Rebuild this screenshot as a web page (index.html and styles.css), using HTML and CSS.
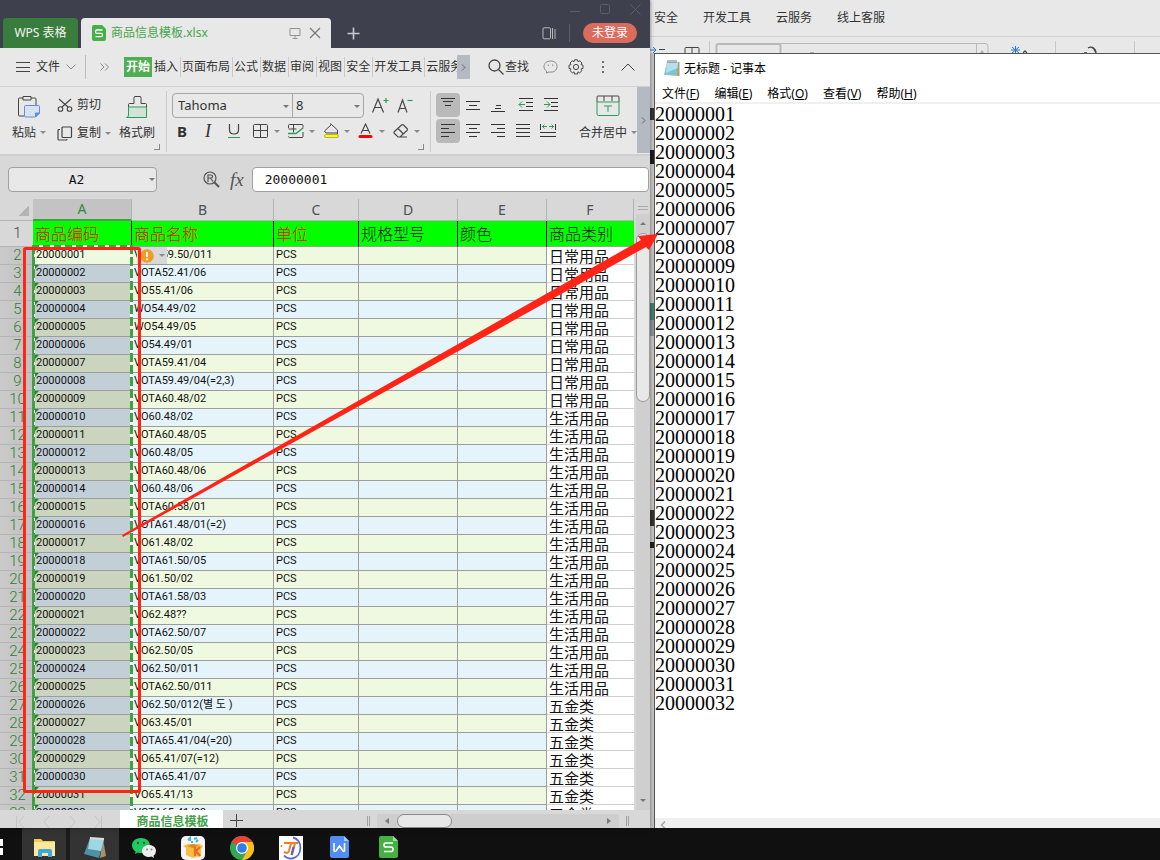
FILE: index.html
```html
<!DOCTYPE html>
<html lang="zh-CN">
<head>
<meta charset="utf-8">
<title>商品信息模板.xlsx</title>
<link rel="stylesheet" href="styles.css">
</head>
<body>
<div class="screen">
  <div class="desktop">
    <main class="wps">
      <header class="titlebar">
        <button class="home-tab">WPS 表格</button>
        <div class="doc-tab">
          <svg width="14" height="16" viewBox="0 0 14 16"><path d="M2 0h8l4 4v10q0 2-2 2H2q-2 0-2-2V2q0-2 2-2z" fill="#45b045"/><path d="M10.500 5H5Q3.500 5 3.500 6.700T5 8.300h4q1.500 0 1.500 1.600T9 11.600H3.500" fill="none" stroke="#fff" stroke-width="1.300"/></svg>
          <span class="doc-name">商品信息模板.xlsx</span>
          <svg width="12" height="12" viewBox="0 0 12 12" fill="none" stroke="#929292"><path d="M1 1.500h10v7H1zM6 8.500v3M3.500 11.500h5"/></svg>
          <button class="plain" aria-label="关闭"><svg width="12" height="12" viewBox="0 0 12 12" stroke="#777" stroke-width="1.200"><path d="M1 1l10 10M11 1L1 11"/></svg></button>
        </div>
        <button class="plain new-tab" aria-label="新建"><svg width="13" height="13" viewBox="0 0 13 13" stroke="#c9cad0" stroke-width="1.600"><path d="M6.500 0.500v12M.5 6.500h12"/></svg></button>
        <div class="title-right">
          <div class="window-buttons">
            <svg width="72" height="14" viewBox="0 0 72 14" fill="none" stroke="#5b5d68"><path d="M1 9.500h10"/><rect x="31.500" y="2.500" width="9" height="9" rx="1"/><path d="M61.500 2.500l10 10M71.500 2.500l-10 10"/></svg>
          </div>
          <div class="login-row">
            <svg width="14" height="13" viewBox="0 0 14 13" fill="none" stroke="#b6b7bd"><rect x="1" y=".8" width="7.500" height="11" rx="1"/><path d="M10.500 1v11M13 2v10"/></svg>
            <span class="sep-dark"></span>
            <button class="login">未登录</button>
          </div>
        </div>
      </header>

      <nav class="menubar">
        <button class="plain file-menu">
          <svg width="14" height="11" viewBox="0 0 14 11" stroke="#444"><path d="M0 .5h14M0 5.500h14M0 9.500h14"/></svg>
          文件
          <svg width="10" height="6" viewBox="0 0 10 6" fill="none" stroke="#888"><path d="M.5.5L5 5 9.500.5"/></svg>
        </button>
        <span class="sep tall"></span>
        <span class="more"><svg width="9" height="8" viewBox="0 0 9 8" fill="none" stroke="#888"><path d="M.5.5L4 4 .5 7.500M5 .5L8.500 4 5 7.500"/></svg></span>
        <div class="tabs">
          <button class="active">开始</button><button>插入</button><button>页面布局</button><button>公式</button><button>数据</button><button>审阅</button><button>视图</button><button>安全</button><button>开发工具</button><button>云服务</button>
        </div>
        <button class="scroll-right" aria-label="更多选项卡"><svg width="5" height="7" viewBox="0 0 5 7" fill="none" stroke="#666"><path d="M1 .5L4 3.500 1 6.500"/></svg></button>
        <button class="plain find"><svg width="16" height="16" viewBox="0 0 16 16" fill="none" stroke="#444" stroke-width="1.300"><circle cx="6.500" cy="6.500" r="5.500"/><path d="M10.500 10.500l5 5"/></svg>查找</button>
        <div class="menu-icons">
          <svg width="15" height="14" viewBox="0 0 15 14" fill="none" stroke="#8a8a8a"><path d="M7.500 1C3.500 1 1 3.500 1 6.500c0 2 1 3.500 2.500 4.500v2l2.500-1c5 .8 8-2 8-5.500S11.500 1 7.500 1z"/><path d="M5.300 4.500v1.500M9.700 4.500v1.500"/></svg>
          <svg width="16" height="16" viewBox="0 0 16 16" fill="none" stroke="#444"><circle cx="8" cy="8" r="2.600"/><path d="M6.500.8h3l.5 1.900 1.700-.9 2.200 2.200-.9 1.600 2 .6v3.200l-2 .6.9 1.700-2.200 2.100-1.700-.9-.5 2.100h-3L6 12.900l-1.700.9-2.200-2.100.9-1.700-2-.6V6.200l2-.6L2.100 4l2.200-2.200 1.700.9z"/></svg>
          <svg class="dots" width="4" height="14" viewBox="0 0 4 14" fill="#444"><circle cx="2" cy="2" r="1"/><circle cx="2" cy="7" r="1"/><circle cx="2" cy="12" r="1"/></svg>
          <svg width="14" height="8" viewBox="0 0 14 8" fill="none" stroke="#444"><path d="M.5 7.500L7 1l6.500 6.500"/></svg>
        </div>
      </nav>

      <section class="ribbon">
        <div class="group clipboard">
          <button class="big paste">
            <svg width="24" height="24" viewBox="0 0 24 24" fill="none" stroke="#444"><path d="M6 3H2.500q-1 0-1 1v16q0 1 1 1H7M14 3h4q1 0 1 1v6M6 1.500h8V5H6z"/><path d="M8.500 10.500h13q1 0 1 1V18l-4 4h-10q-1 0-1-1v-9.500q0-1 1-1z" fill="#d9e2f0" stroke="#5c8fdf"/><path d="M22.500 18h-4v4z" fill="#5c8fdf" stroke="#5c8fdf"/></svg>
            <span>粘贴<i class="caret"></i></span>
          </button>
          <div class="stack">
            <button class="tool"><svg width="16" height="14" viewBox="0 0 16 14" fill="none" stroke="#444" stroke-width="1.100"><circle cx="3.500" cy="11" r="2.300"/><circle cx="12.500" cy="11" r="2.300"/><path d="M2 1l9 8M14 1L5 9"/></svg>剪切</button>
            <button class="tool"><svg width="16" height="15" viewBox="0 0 16 15" fill="none" stroke="#444" stroke-width="1.200"><rect x="5" y="1" width="9.500" height="10.500" rx="1"/><path d="M3 3.500H2q-1 0-1 1V13q0 1 1 1h7q1 0 1-1"/></svg>复制<i class="caret"></i></button>
          </div>
          <button class="big painter">
            <svg width="22" height="24" viewBox="0 0 22 24" fill="none"><path d="M2.500 12h18v10.500h-18z" fill="#d3e2d8"/><path d="M2.500 12V9.500q0-1 1-1H8V5Q7.500 3.500 8.500 1.500h6Q15.500 3.500 15 5v3.500h4.500q1 0 1 1V12" stroke="#444"/><path d="M2 12h18.500v10.500M2.500 12v8q0 2.500-2 2.500h20" stroke="#2a9d57"/></svg>
            <span>格式刷</span>
          </button>
        </div>
        <div class="group font">
          <div class="font-row">
            <div class="font-box">
              <label class="pick name"><select aria-label="字体"><option>Tahoma</option></select></label>
              <label class="pick size"><select aria-label="字号"><option>8</option></select></label>
            </div>
            <button class="plain" aria-label="增大字号"><svg width="17" height="17" viewBox="0 0 17 17" fill="none" stroke="#444" stroke-width="1.200"><path d="M.5 15.500L6 2l5.500 13.500M2.500 10.500h7"/><path d="M14 1v5M11.500 3.500h5" stroke="#2a9d57"/></svg></button>
            <button class="plain" aria-label="减小字号"><svg width="17" height="17" viewBox="0 0 17 17" fill="none" stroke="#444" stroke-width="1.200"><path d="M1 15.500L5.500 3 10 15.500M2.500 11.500h6"/><path d="M10.500 3.500h5" stroke="#2a9d57"/></svg></button>
          </div>
          <div class="style-row">
            <button class="letter b">B</button><button class="letter i">I</button>
            <button class="letter" aria-label="下划线"><svg width="14" height="16" viewBox="0 0 14 16" fill="none"><path d="M2.500 1v6q0 4 4.500 4t4.500-4V1" stroke="#444" stroke-width="1.200"/><path d="M1 14.500h12" stroke="#2a9d57"/></svg></button>
            <button class="drop" aria-label="边框"><svg width="16" height="16" viewBox="0 0 16 16" fill="none" stroke="#444"><rect x=".5" y="1.500" width="14" height="13" rx="1"/><path d="M7.500 1.500v13M.5 7.500h14"/></svg><i class="caret"></i></button>
            <button class="drop" aria-label="绘图边框"><svg width="16" height="16" viewBox="0 0 16 16" fill="none" stroke="#444"><path d="M15 4V2.500q0-1-1-1H1.500q-1 0-1 1V5M5.500 1.500v8M.5 6h8M.5 13.500q0 1 1 1H14q1 0 1-1V9"/><path d="M0 10.500h8l7.500-6" stroke="#2a9d57" stroke-width="1.400"/></svg><i class="caret"></i></button>
            <button class="drop" aria-label="填充颜色"><svg width="17" height="16" viewBox="0 0 17 16" fill="none" stroke="#444"><path d="M3 10L1.500 8 8.500 1.500 14.500 7v3zM8.500 1.500L7 .5M14.500 7v4"/><rect x="1.500" y="11.500" width="14" height="3" rx="1.500" fill="#ff0" stroke="#b8b23c"/></svg><i class="caret"></i></button>
            <button class="drop" aria-label="字体颜色"><svg width="15" height="16" viewBox="0 0 15 16" fill="none"><path d="M3 10.500L7.500 1 12 10.500M4.500 7.500h6" stroke="#444" stroke-width="1.100"/><path d="M2 13.500h11" stroke="#f00" stroke-width="3" stroke-linecap="round"/></svg><i class="caret"></i></button>
            <button class="drop" aria-label="清除"><svg width="16" height="16" viewBox="0 0 16 16" fill="none" stroke="#444" stroke-width="1.100"><path d="M1 9l7.500-7q1-.8 2 0L14 5.500q1 1 0 2L7 14H5L1 10zM5 5.500l5.500 5.500M6 14h8"/></svg><i class="caret"></i></button>
          </div>
        </div>
        <div class="group align">
          <div class="align-grid">
            <button class="on" aria-label="顶端对齐"><svg viewBox="0 0 24 24"><path d="M5 5.500h14M7 8.500h10M9 12.500h6"/></svg></button>
            <button aria-label="垂直居中"><svg viewBox="0 0 24 24"><path d="M5 8.500h14M8 12.500h8M5 16.500h14"/></svg></button>
            <button aria-label="底端对齐"><svg viewBox="0 0 24 24"><path d="M10 12.500h5M9 15.500h6M5 18.500h14"/></svg></button>
            <button aria-label="减少缩进"><svg viewBox="0 0 24 24"><path d="M8 5.500h14M15 9.500h7M15 13.500h7M8 17.500h14"/><path class="g" d="M8 11.500h6M11 8.500l-3 3 3 3"/></svg></button>
            <button aria-label="增加缩进"><svg viewBox="0 0 24 24"><path d="M8 5.500h14M15 9.500h7M15 13.500h7M8 17.500h14"/><path class="g" d="M8 11.500h6M11 8.500l3 3-3 3"/></svg></button>
            <button class="on" aria-label="左对齐"><svg viewBox="0 0 24 24"><path d="M5 5.500h14M5 9.500h8M5 13.500h14M5 17.500h8"/></svg></button>
            <button aria-label="水平居中"><svg viewBox="0 0 24 24"><path d="M5 5.500h14M8 9.500h8M5 13.500h14M8 17.500h8"/></svg></button>
            <button aria-label="右对齐"><svg viewBox="0 0 24 24"><path d="M5 5.500h14M11 9.500h8M5 13.500h14M11 17.500h8"/></svg></button>
            <button aria-label="两端对齐"><svg viewBox="0 0 24 24"><path d="M5 5.500h14M5 9.500h14M5 13.500h14M5 17.500h14"/></svg></button>
            <button aria-label="分散对齐"><svg viewBox="0 0 24 24"><path d="M4.500 5v6M19.500 5v6M4 13.500h16M4 17.500h16"/><path class="g" d="M6 7.500h5M8.500 5.500l-2 2 2 2M13 7.500h5M15.500 5.500l2 2-2 2"/></svg></button>
          </div>
          <button class="big merge">
            <svg width="24" height="22" viewBox="0 0 24 22" fill="none" stroke="#444"><path d="M1 7V2q0-1 1-1h20q1 0 1 1v5M8 1v5M16 1v5"/><path d="M1 7h22v12q0 1.500-1.500 1.500h-19Q1 20.500 1 19zM8 11h8M12 11v6" stroke="#2a9d57"/></svg>
            <span>合并居中<i class="caret"></i></span>
          </button>
        </div>
        <button class="ribbon-next" aria-label="更多工具"><svg width="5" height="7" viewBox="0 0 5 7" fill="none" stroke="#666"><path d="M1 .5L4 3.500 1 6.500"/></svg></button>
      </section>

      <section class="formula">
        <label class="pick name-box"><input aria-label="名称框" value="A2"></label>
        <svg width="17" height="17" viewBox="0 0 17 17" fill="none" stroke="#555" stroke-width="1.200"><circle cx="7" cy="7" r="6"/><path d="M11.500 11.500l4.500 4.500" stroke-width="2"/><path d="M5 11V4h3q1.500 0 1.500 1.500T8 7H5M7.500 7L10 10.500"/></svg>
        <span class="fx">fx</span>
        <input class="formula-input" aria-label="编辑栏" value="20000001">
      </section>

      <section class="sheet">
        <div class="grid">
          <table>
            <colgroup><col class="c0"><col class="c1"><col class="c2"><col class="c3"><col class="c4"><col class="c5"><col></colgroup>
            <thead><tr><th class="corner"></th><th class="current">A</th><th>B</th><th>C</th><th>D</th><th>E</th><th>F</th></tr></thead>
            <tbody id="rows">
              <tr class="heads"><th>1</th><td class="red">商品编码</td><td class="red">商品名称</td><td class="red">单位</td><td>规格型号</td><td>颜色</td><td>商品类别</td></tr>
            </tbody>
          </table>
          <div class="ants"></div>
          <button class="warning" aria-label="错误检查"><svg width="14" height="14" viewBox="0 0 14 14"><circle cx="7" cy="7" r="6.800" fill="#f09c28"/><path d="M7 3v5M7 9.500v1.800" stroke="#fff" stroke-width="1.800"/></svg><i class="caret"></i></button>
        </div>
        <div class="vscroll"><span class="split"></span><span class="track"><i class="up"></i><b></b><i class="down"></i></span></div>
      </section>

      <footer class="sheetbar">
        <svg class="sheet-nav" width="90" height="12" viewBox="0 0 90 12" fill="none" stroke="#c4c4c4"><path d="M1.500 0v12M9 0L4 6l5 6M34 0l-5 6 5 6M55 0l5 6-5 6M80 0l5 6-5 6M86.500 0v12"/></svg>
        <button class="sheet-tab">商品信息模板</button>
        <button class="plain add-sheet" aria-label="新建工作表"><svg width="13" height="13" viewBox="0 0 13 13" stroke="#444"><path d="M6.500 0v13M0 6.500h13"/></svg></button>
        <div class="hscroll"><span class="grip"></span><span class="htrack"><i class="left"></i><b></b><i class="right"></i></span><span class="grip"></span></div>
      </footer>
    </main>

    <section class="behind">
      <nav class="behind-menu"><a href="#">安全</a><a href="#">开发工具</a><a href="#">云服务</a><a href="#">线上客服</a></nav>
      <div class="behind-tools">
        <svg width="505" height="17" viewBox="0 0 505 17" fill="none">
          <path d="M0 13h6M3 10l3 3-3 3" stroke="#2878d0"/><path d="M9 12.500h6M9 16.500h6" stroke="#444"/>
          <path d="M35 17v-5.500q0-1 1-1h12q1 0 1 1V17M42 10.500V17" stroke="#444"/>
          <path d="M59.500 4v13M405.500 4v13M484.500 4v13" stroke="#c8c8c8"/>
          <path d="M66.500 17V9q0-2.500 2.500-2.500h266q3 0 3 3V17M326.500 7v10" stroke="#b9b9b9"/>
          <path d="M66.500 17V9q0-2 2-2h60q2 0 2 2v8" stroke="#b9b9b9" stroke-width="2"/><path d="M160 16h4" stroke="#777"/>
          <path d="M330 16l2-3 2 3" fill="#aaa"/><path d="M361 13h9M365.500 9v8M362 10l7 6M369 10l-7 6" stroke="#2878d0"/><path d="M373 17q2-6 4 0M434 16h3M438 11q5-3 8 5M442 10q4 2 4 6" stroke="#444" stroke-width="1.300"/>
        </svg>
      </div>
      <div class="notepad">
        <header><svg width="16" height="17" viewBox="0 0 16 17"><path d="M4 2h11.500v14L3 15z" fill="#b59a6d"/><path d="M3 2h11l-1 13H0z" fill="#7fc4d4"/><path d="M3 2h11l-.5 6L2 13z" fill="#b3e0ea"/><path d="M4 0v3M6 0v3M8 0v3M10 0v3M12 0v3" stroke="#555" stroke-width=".8"/></svg><h1>无标题 - 记事本</h1></header>
        <nav><button>文件(<u>F</u>)</button><button>编辑(<u>E</u>)</button><button>格式(<u>O</u>)</button><button>查看(<u>V</u>)</button><button>帮助(<u>H</u>)</button></nav>
        <textarea id="note" aria-label="记事本内容" spellcheck="false"></textarea>
        <footer><svg width="6" height="8" viewBox="0 0 6 8" fill="none" stroke="#a6a6a6" stroke-width="1.500"><path d="M5 .5L1.500 4 5 7.500"/></svg></footer>
      </div>
    </section>
  </div>

  <footer class="taskbar">
    <span class="start"></span>
    <button class="task open" aria-label="资源管理器"><svg width="24" height="24" viewBox="0 0 24 24"><path d="M1 3h7l2 2h11q1 0 1 1v14H1z" fill="#f6c947"/><path d="M1 6h21v14H1z" fill="#ffe79b"/><path d="M5 21v-6q0-2 2-2h10q2 0 2 2v6h-4v-4H9v4z" fill="#39a9e0"/></svg></button>
    <button class="task open" aria-label="记事本"><svg width="24" height="24" viewBox="0 0 24 24"><path d="M20 3l3 17-6 2z" fill="#a7906b"/><path d="M7 2l14 1-5 19L1 18z" fill="#4d91a5"/><path d="M7 2l14 1-3 12-13-2z" fill="#9fd6e3"/><path d="M7 2l14 1" stroke="#ddd" stroke-width="2"/></svg></button>
    <button class="task" aria-label="微信"><svg width="24" height="24" viewBox="0 0 24 24"><path d="M9 2C4 2 0 5 0 9.500c0 2.500 1.500 4.500 3.500 6L3 18l3-1.500q1.500.5 3 .5c5 0 9-3 9-7.500S14 2 9 2z" fill="#22ca62"/><circle cx="6" cy="7" r="1.200" fill="#176c3a"/><circle cx="12" cy="7" r="1.200" fill="#176c3a"/><path d="M17 9c-4 0-7 2.500-7 6s3 6 7 6q1.500 0 2.500-.4L22 22l-.5-2.200Q24 18 24 15c0-3.500-3-6-7-6z" fill="#ededed"/><circle cx="15" cy="13.500" r="1" fill="#888"/><circle cx="19.500" cy="13.500" r="1" fill="#888"/></svg></button>
    <button class="task" aria-label="快压"><svg width="24" height="24" viewBox="0 0 24 24"><rect width="24" height="24" rx="5" fill="#f5f5f5"/><path d="M7 4l2-2v3M13 3l3-1M15 6l2-2M11 7V5" stroke="#40b5ee" stroke-width="2"/><path d="M2 10l5-2h11l4 2-2 3v7l-8 2-7-3v-7z" fill="#f9bd45"/><path d="M6 10l6-2 6 2-6 2z" fill="#dc8a20"/><path d="M14 11v9M19 11l-4 4 4 5" stroke="#ee6a20" stroke-width="2.200" fill="none"/></svg></button>
    <button class="task" aria-label="Chrome"><svg width="24" height="24" viewBox="0 0 24 24"><circle cx="12" cy="12" r="12" fill="#33a852"/><path d="M12 12L1.600 6A12 12 0 0 1 22.400 6z" fill="#ea4335"/><path d="M12 6h10.400A12 12 0 0 1 12 24l5.200-9z" fill="#fbc116"/><circle cx="12" cy="12" r="6" fill="#fff"/><circle cx="12" cy="12" r="4.800" fill="#2f7de9"/></svg></button>
    <button class="task" aria-label="JT"><svg width="24" height="24" viewBox="0 0 24 24" fill="none"><path d="M0 0h24v24H0z" fill="#fff"/><path d="M14 1.500c10 2 10 19-1 21q-5 .5-8-3" stroke="#5565e6" stroke-width="1.800"/><path d="M5 7h7l-2 8q-1 3-5 1" stroke="#ef7d23" stroke-width="2"/><path d="M12 7h7M16 7l-3 12" stroke="#ef7d23" stroke-width="2"/><path d="M14.500 11l-2 8" stroke="#4f62de" stroke-width="2"/><circle cx="2.500" cy="10" r="1" fill="#ef7d23"/></svg></button>
    <button class="task" aria-label="WPS 文字"><svg width="20" height="22" viewBox="0 0 20 22" fill="none"><path d="M2 0h12l5 5v15q0 2-2 2H2q-2 0-2-2V2q0-2 2-2z" fill="#528df3"/><path d="M14 0l5 5h-5z" fill="#aac8fb"/><path d="M4 7v8q1 1 2 0l3.500-5 3.500 5q1 1 1.500 0V7" stroke="#fff" stroke-width="1.600"/></svg></button>
    <button class="task" aria-label="WPS 表格"><svg width="20" height="22" viewBox="0 0 20 22" fill="none"><path d="M2 0h12l5 5v15q0 2-2 2H2q-2 0-2-2V2q0-2 2-2z" fill="#44b142"/><path d="M14 0l5 5h-5z" fill="#a0dba0"/><path d="M14 7H7q-2 0-2 2t2 2h5q2 0 2 2.300T12 15.500H5" stroke="#fff" stroke-width="1.700"/></svg></button>
  </footer>

  <svg class="annotation" width="1160" height="860" viewBox="0 0 1160 860"><rect x="24.500" y="248.500" width="115" height="543" rx="1" fill="none" stroke="#ff2416" stroke-width="3"/><path d="M122 535L641 240 638 236 658 234 649 250 646 247 123 537z" fill="#ff2416"/></svg>
</div>
<script src="app.js"></script>
</body>
</html>
```
FILE: styles.css
```css
* { box-sizing: border-box; }
body { margin: 0; font: 12px/16px "Noto Sans", "Noto Sans CJK SC", sans-serif; color: #333; }
button { font: inherit; color: inherit; border: 0; padding: 0; background: none; white-space: nowrap; }
svg { display: block; flex: none; }
input, select, textarea { font: inherit; color: inherit; border: 0; padding: 0; outline: 0; }
.plain { display: flex; align-items: center; }

.screen { position: relative; display: flex; flex-direction: column; height: 100vh; overflow: hidden; }
.desktop { flex: 1; min-height: 0; display: grid; grid-template-columns: 65fr 51fr; }
.annotation { position: absolute; z-index: 2; top: 0; left: 0; pointer-events: none; }

.wps { position: relative; z-index: 1; display: flex; flex-direction: column; min-width: 0; min-height: 0; background: #d8d8d8; box-shadow: 0 0 4px rgba(0,0,0,.5); }

.titlebar { display: flex; align-items: flex-end; height: 48px; padding-left: 3px; background: #3e414d; }
.home-tab { width: 75px; height: 30px; border-radius: 4px 4px 0 0; background: #397d3d; color: #f0f5f0; }
.doc-tab { display: flex; align-items: center; width: 250px; height: 30px; margin-left: 3px; padding: 0 10px 0 11px; gap: 8px; border-radius: 4px 4px 0 0; background: #e8e8e8; }
.doc-name { flex: 1; margin-left: -3px; color: #45a549; }
.new-tab { height: 30px; margin-left: 16px; }
.title-right { flex: 1; display: flex; flex-direction: column; align-items: flex-end; align-self: stretch; }
.window-buttons { padding: 2px 9px 0 0; height: 20px; }
.login-row { display: flex; align-items: center; height: 26px; padding-right: 13px; gap: 13px; }
.sep-dark { width: 1px; height: 18px; background: #5b5e69; }
.login { width: 54px; height: 20px; border-radius: 10px; background: #db6b5c; color: #fff; }

.menubar { display: flex; align-items: center; height: 39px; border-bottom: 1px solid #d0d0d0; background: #e8e8e8; padding-left: 16px; }
.file-menu { gap: 6px; }
.sep.tall { width: 1px; height: 24px; margin-left: 9px; background: #bdbdbd; }
.more { margin: 0 15px 0 14px; }
.tabs { display: flex; flex: 0 1 333px; min-width: 0; overflow: hidden; }
.tabs button { flex: none; height: 20px; padding: 0 2px; border-right: 1px solid #c9c9c9; margin-right: -1px; }
.tabs .active { background: #4fae51; color: #fff; font-weight: bold; margin-right: 0; border: 0; }
.scroll-right { display: grid; place-items: center; width: 13px; height: 24px; background: #b5b9c2; }
.find { margin-left: 18px; gap: 1px; }
.menu-icons { flex: 1; display: flex; align-items: center; gap: 10px; padding: 0 15px 0 14px; }
.menu-icons .dots { margin: 0 auto; }

.ribbon { display: flex; height: 69px; background: #e8e8e8; border-bottom: 2px solid #cfcfcf; }
.group { position: relative; display: flex; border-right: 1px solid #cbcbcb; height: 61px; margin-top: 4px; }
.group:not(.align)::after { content: ""; position: absolute; right: 6px; bottom: 2px; width: 5px; height: 5px; border: solid #888; border-width: 0 1px 1px 0; }
.caret { display: inline-block; flex: none; margin-left: 4px; border: solid transparent; border-width: 3px 3px 0; border-top-color: #8a8a8a; vertical-align: 3px; }
.big { display: flex; flex-direction: column; align-items: center; justify-content: space-between; padding: 4px 0 3px; height: 53px; }
.clipboard { flex: 0 0 167px; padding-left: 12px; }
.stack { margin-left: 11px; width: 58px; display: flex; flex-direction: column; gap: 2px; padding-top: 1px; }
.stack .tool { display: flex; align-items: center; gap: 4px; height: 26px; }
.stack .caret { margin: 0; }
.painter { margin-left: 4px; }
.font { flex: 0 0 264px; flex-direction: column; padding: 1px 0 0 5px; }
.font-row { display: flex; height: 26px; align-items: center; gap: 8px; }
.font-box { display: flex; width: 192px; height: 25px; border: 1px solid #a6a6a6; border-radius: 4px; font-size: 13px; }
.pick { position: relative; display: flex; }
.pick::after { content: ""; position: absolute; right: 3px; top: 11px; border: solid transparent; border-width: 3px 3px 0; border-top-color: #777; }
.pick select { appearance: none; width: 100%; background: none; padding-left: 5px; }
.pick.name { flex: 1; border-right: 1px solid #a6a6a6; }
.pick.size { width: 70px; }
.pick.size select { padding-left: 3px; }
.style-row { display: flex; height: 26px; align-items: center; }
.letter { width: 25px; display: grid; place-items: center start; padding-left: 5px; font-size: 15px; }
.b { font-weight: bold; }
.i { font-family: "Liberation Serif", serif; font-style: italic; font-size: 18px; padding-left: 8px; }
.drop { display: flex; align-items: center; justify-content: space-between; width: 35px; padding-left: 6px; padding-right: 2px; }
.drop .caret { margin: 0; }
.align { flex: 1; border: 0; padding-left: 5px; justify-content: space-between; }
.align-grid { display: grid; grid-template-columns: repeat(5, 25px); grid-auto-rows: 24px; row-gap: 2px; padding-top: 2px; }
.align-grid button { width: 24px; height: 24px; border-radius: 4px; }
.align-grid .on { background: #b9b9b9; }
.align-grid svg { width: 24px; height: 24px; fill: none; stroke: #333; }
.align-grid .g { stroke: #2a9d57; }
.ribbon-next { display: grid; place-items: center; width: 13px; height: 66px; background: #b5b9c2; }

.formula { display: flex; align-items: center; height: 43px; padding: 4px 1px 0 8px; }
.name-box { width: 149px; height: 25px; margin-right: 46px; }
.name-box::after { right: 2px; }
.name-box input, .formula-input { border: 1px solid #a0a0a0; border-radius: 4px; height: 25px; font: 13px/22px "DejaVu Sans Mono", monospace; color: #111; }
.name-box input { width: 100%; text-align: center; background: #e8e8e8; padding-right: 12px; }
.fx { margin: 0 8px 0 10px; font: italic 19px/20px "Liberation Serif", serif; color: #555; }
.formula-input { flex: 1; min-width: 0; padding-left: 12px; background: #fff; }

.sheet { flex: 1; min-height: 0; display: flex; }
.grid { position: relative; flex: 1; min-width: 0; overflow: hidden; }
table { width: 100%; table-layout: fixed; border-collapse: separate; border-spacing: 0; }
.c0 { width: 33px; } .c1 { width: 99px; } .c2 { width: 142px; } .c3 { width: 85px; } .c4 { width: 99px; } .c5 { width: 89px; }
th { font-weight: normal; padding: 0; }
thead th { height: 22px; font-size: 14px; line-height: 20px; border-right: 1px solid #b4b4b4; border-bottom: 1px solid #b4b4b4; color: #4a5058; }
thead .corner { background: linear-gradient(135deg, transparent 50%, #b4b4b4 50%) 18px 6px / 11px 11px no-repeat; border-right: 0; }
thead .current { background: #c3c3c3; color: #2f8a3c; border-bottom: 2px solid #3ea33e; }
tbody th { height: 18px; padding-left: 2px; font: 15px/17px Roboto, sans-serif; font-weight: 300; color: #2c8035; background: linear-gradient(90deg, #cacaca, #c2c2c2); border-bottom: 1px solid #b4b4b4; }
td { height: 18px; padding: 0 0 0 2px; border: solid #9d9d9d; border-width: 0 1px 1px 0; font: 11px/16px Roboto, "Noto Sans CJK KR", sans-serif; color: #111; white-space: nowrap; vertical-align: top; }
.heads th { height: 26px; color: #444; background: #d8d8d8; }
.heads td { height: 26px; background: #0f0; font: 16px/25px "Noto Sans CJK SC", sans-serif; font-weight: 300; border-right-color: #000; }
.heads .red { color: #f00; }
.heads td:last-child { border-right: 0; }
.odd td { background: #eff9df; }
.even td { background: #e5f4fa; }
.odd .code { background: #cbd4bf; }
.even .code { background: #c3cfd7; }
.first .code { background: #eff9df; }
td.code { position: relative; padding-left: 3px; }
.code::before { content: ""; position: absolute; left: 2px; top: 0; border-top: 4px solid #1b8a2a; border-right: 4px solid transparent; }
.odd td.kind, .even td.kind { background: #fff; border-right: 0; border-bottom-color: #d0d0d0; font: 15px/18px "Noto Sans CJK SC", sans-serif; }
td.kind div { height: 17px; }
.ants { position: absolute; left: 32px; width: 101px; top: 46px; bottom: 0; background:
  linear-gradient(#3ea33e, #3ea33e) left / 2px 100% no-repeat,
  repeating-linear-gradient(#3ea33e 0 9px, #fff 9px 12px) 2px 0 / 1px 100% no-repeat,
  repeating-linear-gradient(#3ea33e 0 9px, #fff 9px 12px) right / 3px 100% no-repeat,
  repeating-linear-gradient(90deg, #3ea33e 0 7px, #fff 7px 11px) top / 100% 2px no-repeat; pointer-events: none; }
.warning { position: absolute; left: 137px; top: 48px; width: 30px; height: 17px; display: flex; align-items: center; gap: 1px; padding-left: 3px; background: #d8d8d8; }

.vscroll { width: 16px; display: flex; flex-direction: column; padding-left: 2px; }
.split { width: 10px; height: 4px; margin: 7px 0 4px 2px; border: solid #aaa; border-width: 1px 0; }
.track { flex: 1; display: flex; flex-direction: column; align-items: center; background: #cfcfcf; padding: 8px 0; }
.track b { width: 14px; height: 169px; margin-top: 8px; border: 1px solid #999; border-radius: 7px; background: #e8e8e8; }
.up { border: solid transparent; border-width: 0 3px 3px; border-bottom-color: #777; }
.down { margin-top: auto; border: solid transparent; border-width: 3px 3px 0; border-top-color: #777; }

.sheetbar { position: relative; display: flex; align-items: center; height: 18px; background: #d8d8d8; }
.sheet-nav { margin: 5px 15px 0; }
.sheet-tab { align-self: stretch; width: 103px; padding: 4px 0 0 2px; background: #fff; color: #43a047; font-weight: bold; }
.add-sheet { margin: 2px 0 0 7px; }
.hscroll { flex: 1; display: flex; align-items: center; justify-content: flex-end; padding: 4px 21px 0 0; gap: 7px; }
.grip { width: 3px; height: 10px; border: solid #a0a0a0; border-width: 0 1px; }
.htrack { display: flex; align-items: center; width: 242px; height: 14px; padding: 0 8px; background: #cecece; }
.htrack b { width: 55px; height: 14px; margin-left: 8px; border: 1px solid #888; border-radius: 7px; background: #e8e8e8; }
.left { border: solid transparent; border-width: 3px 4px 3px 0; border-right-color: #777; }
.right { margin-left: auto; border: solid transparent; border-width: 3px 0 3px 4px; border-left-color: #777; }

.behind { display: flex; flex-direction: column; min-width: 0; min-height: 0; background: linear-gradient(#c6c6c6 108px, #333 108px 120px, #c6c6c6 120px 150px, #1b1b22 150px 164px, #c6c6c6 164px 303px, #447f72 303px 320px, #8a949c 320px 336px, #c6c6c6 336px 510px, #333 510px 526px, #c6c6c6 526px 542px, #222 542px 548px, #c6c6c6 548px); }
.behind-menu { display: flex; gap: 25px; height: 37px; padding-left: 4px; align-items: center; background: #e8e8e8; border-bottom: 1px solid #d2d2d2; }
.behind-menu a { color: #333; text-decoration: none; }
.behind-tools { height: 16px; background: #e8e8e8; overflow: hidden; }
.notepad { flex: 1; min-height: 0; margin-left: 4px; display: flex; flex-direction: column; border: solid #555; border-width: 1px 0 0 1px; background: #fff; color: #000; }
.notepad header { display: flex; align-items: center; height: 29px; padding-left: 9px; gap: 4px; }
.notepad h1 { margin: 0; font-size: 12px; font-weight: normal; }
.notepad nav { display: flex; gap: 15px; height: 21px; padding: 2px 0 0 7px; align-items: center; border-bottom: 2px solid #f0f0f0; }
.notepad textarea { flex: 1; min-height: 0; padding-top: 1px; resize: none; overflow: hidden; font: 20px/19px "Liberation Serif", serif; }
.notepad footer { height: 10px; padding: 3px 5px 0; background: #f0f0f0; overflow: hidden; }

.taskbar { display: flex; height: 32px; background: #101010; }
.start { width: 3px; height: 16px; margin: 11px 19px 0 0; background: linear-gradient(#fff 7px, #101010 7px 9px, #fff 9px); }
.task { width: 49px; padding: 8px 0 0 1px; display: flex; justify-content: center; align-items: flex-start; }
.task.open { width: 48px; background: #333; border-right: 4px solid #1b1b1b; }
.task.open + .task.open { width: 49px; border-right: 0; }
```
FILE: app.js
```js
const names = [
  'VOTA59.50/011', 'VOTA52.41/06', 'VO55.41/06', 'WO54.49/02', 'WO54.49/05', 'VO54.49/01',
  'VOTA59.41/04', 'VOTA59.49/04(=2,3)', 'VOTA60.48/02', 'VO60.48/02', 'VOTA60.48/05', 'VO60.48/05',
  'VOTA60.48/06', 'VO60.48/06', 'VOTA60.58/01', 'VOTA61.48/01(=2)', 'VO61.48/02', 'VOTA61.50/05',
  'VO61.50/02', 'VOTA61.58/03', 'VO62.48??', 'VOTA62.50/07', 'VO62.50/05', 'VO62.50/011',
  'VOTA62.50/011', 'VO62.50/012(별 도 )', 'VO63.45/01', 'VOTA65.41/04(=20)', 'VO65.41/07(=12)',
  'VOTA65.41/07', 'VO65.41/13', 'VOTA65.41/09'
];
const codes = names.map((_, i) => String(20000001 + i));
const kind = i => (i < 9 ? '日常用品' : i < 25 ? '生活用品' : '五金类');

document.getElementById('rows').insertAdjacentHTML('beforeend', names.map((name, i) =>
  `<tr class="${i % 2 ? 'even' : 'odd'}${i ? '' : ' first'}"><th>${i + 2}</th><td class="code">${codes[i]}</td>` +
  `<td>${name}</td><td>PCS</td><td></td><td></td><td class="kind"><div>${kind(i)}</div></td></tr>`
).join(''));
document.getElementById('note').value = codes.join('\n');
```
